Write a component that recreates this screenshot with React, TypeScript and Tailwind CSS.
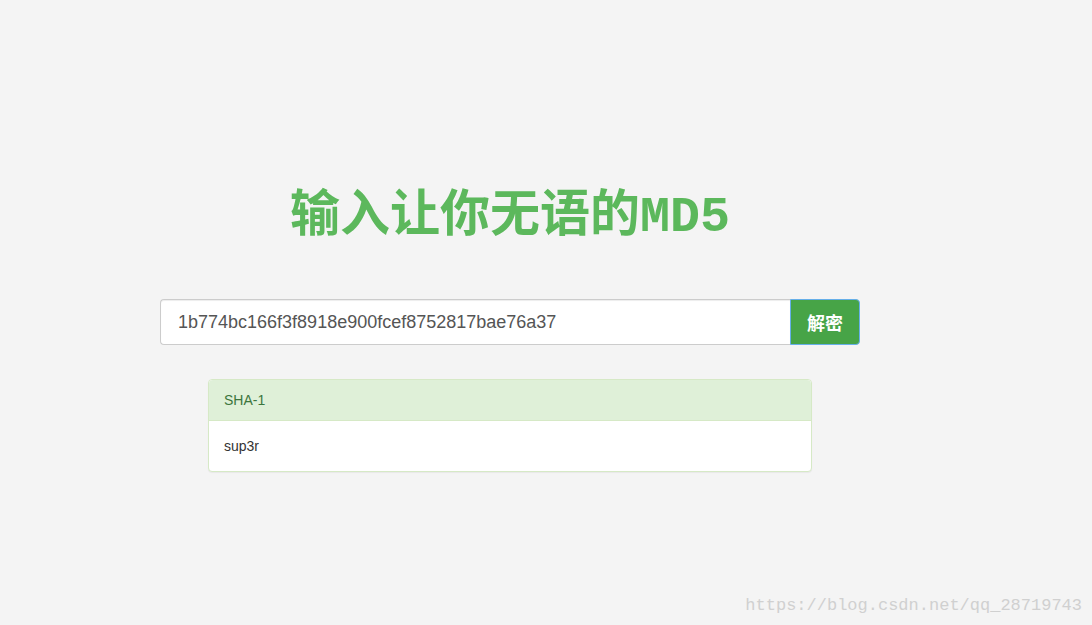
export default function App() {
  return (
    <div className="relative min-h-[625px] w-full bg-[#f4f4f4] font-['Liberation_Sans',Arial,sans-serif]">
      <div className="w-[1020px] flex flex-col items-center pt-[188px]">
        <h1 className="text-[50px] leading-[60px] font-semibold text-[#5cb85c] font-['Liberation_Mono','Noto_Sans_CJK_SC',monospace]">
          输入让你无语的MD5
        </h1>

        <div className="mt-[51px] flex w-[700px]">
          <input
            className="flex-1 h-[46px] px-[17px] rounded-l-[4px] border border-[#ccc] border-r-0 bg-white text-[18px] text-[#555] outline-none shadow-[inset_0_1px_1px_rgba(0,0,0,0.075)]"
            defaultValue="1b774bc166f3f8918e900fcef8752817bae76a37"
          />
          <button className="w-[70px] h-[46px] rounded-r-[4px] bg-[#47a447] border border-[#66afe9] text-white text-[18px] font-bold font-['Noto_Sans_CJK_SC',sans-serif]">
            解密
          </button>
        </div>

        <div className="mt-[34px] w-[604px] rounded-[4px] border border-[#d6e9c6] bg-white shadow-[0_1px_1px_rgba(0,0,0,0.05)]">
          <div className="h-[41px] px-[15px] flex items-center bg-[#dff0d8] border-b border-[#d6e9c6] rounded-t-[4px] text-[14px] text-[#3c763d]">
            SHA-1
          </div>
          <div className="h-[50px] px-[15px] flex items-center text-[14px] text-[#333]">
            sup3r
          </div>
        </div>
      </div>

      <div className="absolute right-[10px] bottom-[7px] text-[17px] text-[#d0d0d0] font-['Liberation_Mono',monospace]">
        https://blog.csdn.net/qq_28719743
      </div>
    </div>
  );
}
